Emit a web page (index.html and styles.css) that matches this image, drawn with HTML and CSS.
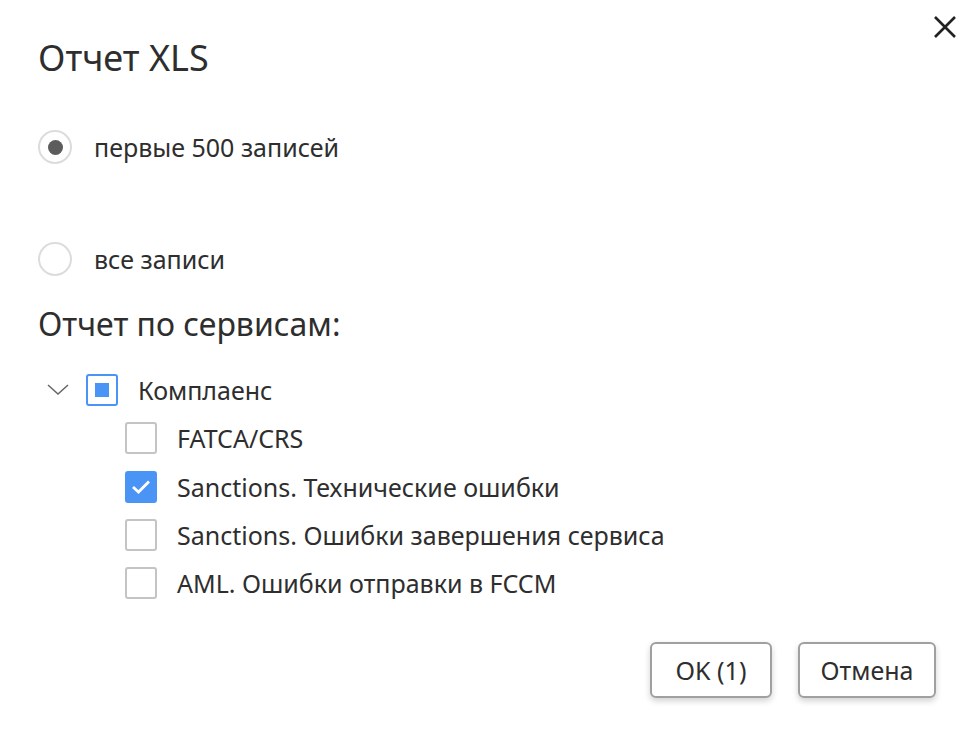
FILE: index.html
```html
<!DOCTYPE html>
<html lang="ru">
<head>
<meta charset="utf-8">
<title>Отчет XLS</title>
<link rel="stylesheet" href="styles.css">
</head>
<body>
<div class="dialog">
  <button class="close" aria-label="Закрыть">
    <svg width="24" height="24" viewBox="0 0 24 24"><path d="M2 2 L22 22 M22 2 L2 22" stroke="#222" stroke-width="2.6" fill="none"/></svg>
  </button>
  <h1 class="title">Отчет XLS</h1>
  <div class="radios">
    <label class="radio-row first"><span class="radio checked"></span><span class="label">первые 500 записей</span></label>
    <label class="radio-row second"><span class="radio"></span><span class="label">все записи</span></label>
  </div>
  <h2 class="subtitle">Отчет по сервисам:</h2>
  <div class="tree">
    <div class="row parent">
      <svg class="chev" width="22" height="12" viewBox="0 0 22 12"><path d="M1 1 L11 10 L21 1" stroke="#666" stroke-width="1.5" fill="none"/></svg>
      <span class="cb indeterminate"></span>
      <span class="label">Комплаенс</span>
    </div>
    <div class="row child"><span class="cb"></span><span class="label">FATCA/CRS</span></div>
    <div class="row child"><span class="cb checked"><svg width="20" height="16" viewBox="0 0 20 16"><path d="M2 8 L7.5 13 L18 2.5" stroke="#fff" stroke-width="2.8" fill="none"/></svg></span><span class="label">Sanctions. Технические ошибки</span></div>
    <div class="row child"><span class="cb"></span><span class="label">Sanctions. Ошибки завершения сервиса</span></div>
    <div class="row child"><span class="cb"></span><span class="label">AML. Ошибки отправки в FCCM</span></div>
  </div>
  <div class="actions">
    <button class="btn ok">OK (1)</button>
    <button class="btn cancel">Отмена</button>
  </div>
</div>
</body>
</html>
```
FILE: styles.css
```css
* { box-sizing: border-box; }
html, body { margin: 0; padding: 0; background: #fff; }
body {
  font-family: "Noto Sans", "Open Sans", sans-serif;
  color: #2e2e2e;
  width: 977px;
  height: 729px;
  overflow: hidden;
}
.dialog {
  position: relative;
  padding: 0 41px 0 38px;
}
.close {
  position: absolute;
  top: 15px;
  right: 20px;
  width: 24px;
  height: 24px;
  padding: 0;
  border: 0;
  background: none;
}
.close svg { display: block; }
.title, .subtitle {
  font-weight: 400;
  line-height: 40px;
  margin: 0;
  color: #2e2e2e;
}
.title { font-size: 36px; padding-top: 38px; }
.subtitle { font-size: 32px; margin-top: 27px; }
.radios { display: flex; flex-direction: column; }
.radio-row {
  display: flex;
  align-items: center;
  height: 36px;
  gap: 22px;
  font-size: 25px;
}
.radio-row.first { margin-top: 51px; }
.radio-row.second { margin-top: 76px; }
.radio {
  width: 34px;
  height: 34px;
  border: 2px solid #dcdcdc;
  border-radius: 50%;
  display: flex;
  align-items: center;
  justify-content: center;
  flex: none;
}
.radio.checked::after {
  content: "";
  width: 15px;
  height: 15px;
  border-radius: 50%;
  background: #5c5c5c;
}
.tree { margin-top: 22px; }
.row {
  display: flex;
  align-items: center;
  height: 48.3px;
  font-size: 25px;
}
.row.parent { padding-left: 9px; }
.chev { margin-right: 17px; flex: none; }
.row.child { padding-left: 87px; }
.cb {
  width: 32px;
  height: 32px;
  border: 2px solid #c4c4c4;
  border-radius: 3px;
  flex: none;
  display: flex;
  align-items: center;
  justify-content: center;
  margin-right: 20px;
}
.cb.indeterminate { border-color: #4a94f5; }
.cb.indeterminate::after {
  content: "";
  width: 14px;
  height: 14px;
  background: #4a94f5;
}
.cb.checked { background: #4a94f5; border-color: #4a94f5; }
.cb svg { display: block; }
.actions {
  display: flex;
  justify-content: flex-end;
  gap: 26px;
  margin-top: 35px;
}
.btn {
  font-family: inherit;
  font-size: 25px;
  color: #2e2e2e;
  background: #fff;
  border: 2px solid #a0a0a0;
  border-radius: 6px;
  height: 56px;
  padding: 0;
  box-shadow: 0 3px 6px rgba(0,0,0,0.18);
}
.btn.ok { width: 122px; }
.btn.cancel { width: 138px; }
```
